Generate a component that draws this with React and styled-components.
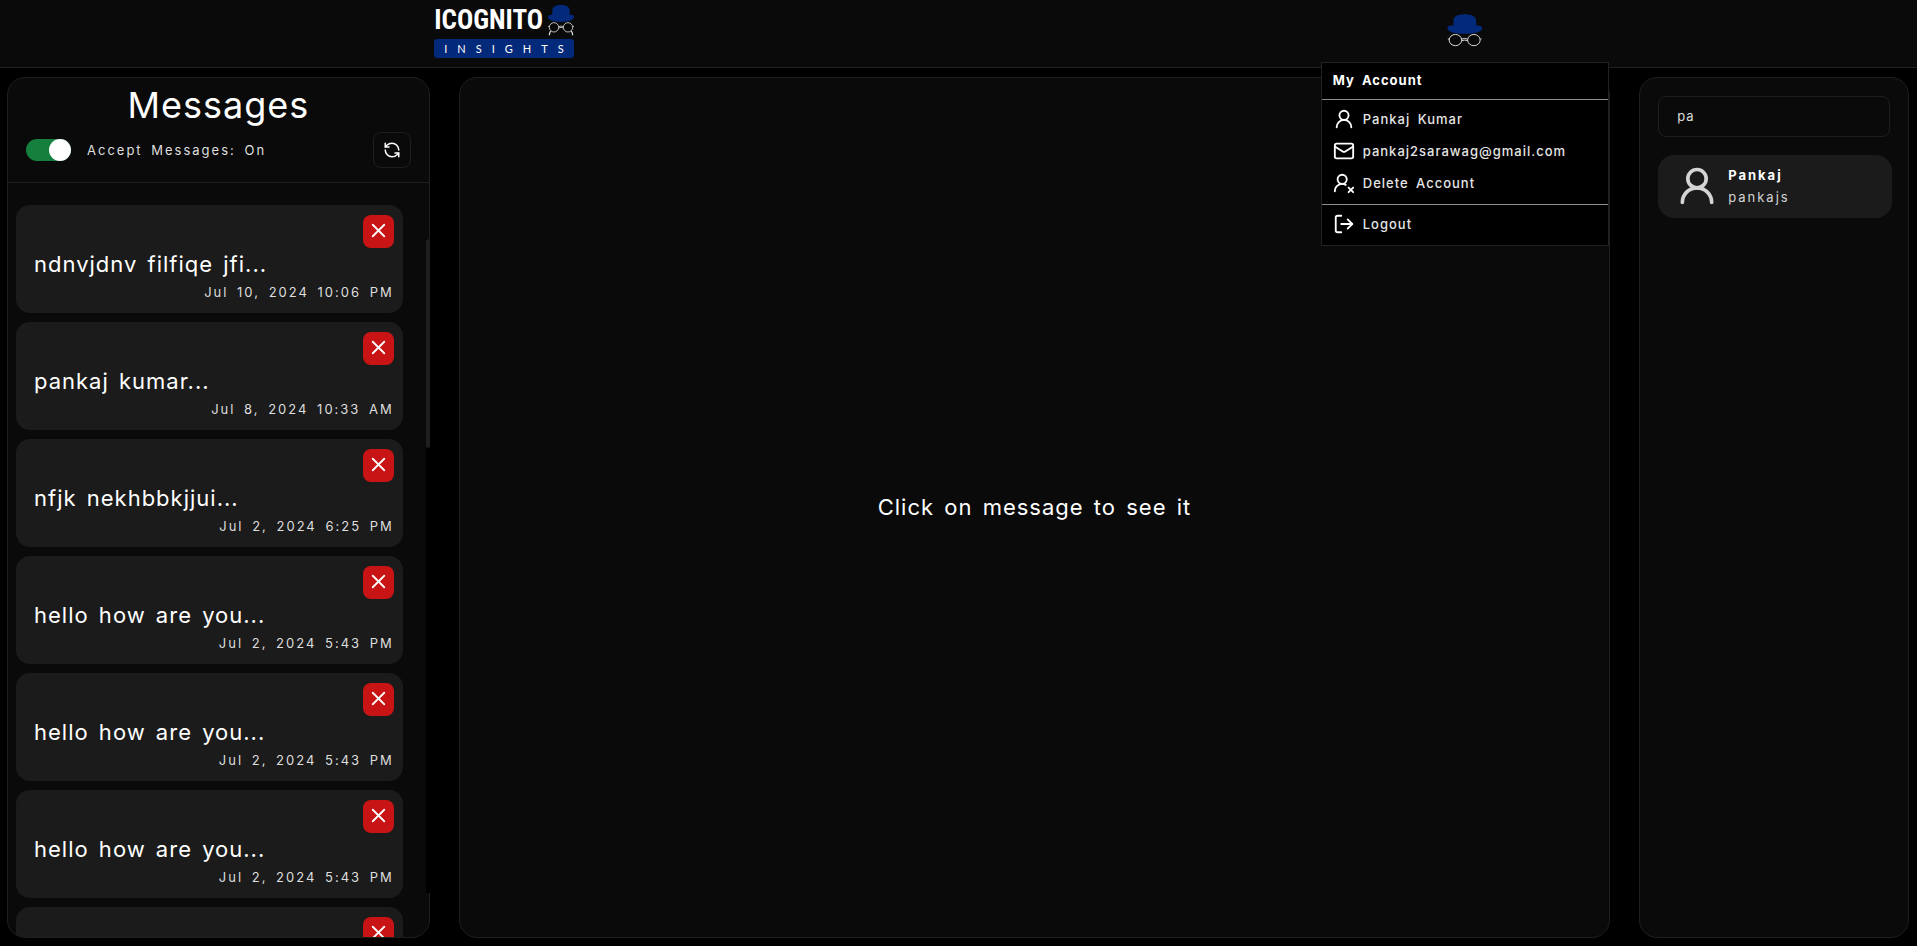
import React, { useState } from "react";
import styled, { createGlobalStyle } from "styled-components";
import { LogOut, Mail, RefreshCcw, UserRound, UserRoundX, X } from "lucide-react";

const Global = createGlobalStyle`
  *, *::before, *::after { box-sizing: border-box; }
  body {
    margin: 0;
    background: #000;
    color: #fff;
    font-family: Inter, "Liberation Sans", sans-serif;
    font-size: 13px;
    line-height: 20px;
    letter-spacing: 1px;
    word-spacing: 3px;
  }
  button, input { font: inherit; letter-spacing: inherit; word-spacing: inherit; color: inherit; }
  button { cursor: pointer; padding: 0; }
  h1, p, ul { margin: 0; padding: 0; }
  ul { list-style: none; }
`;

const Page = styled.div`
  display: flex;
  flex-direction: column;
  height: 100vh;
`;

const Header = styled.header`
  display: flex;
  justify-content: space-around;
  align-items: flex-start;
  flex: none;
  height: 68px;
  background: #0a0a0a;
  border-bottom: 1px solid #222;
`;

const Logo = styled.a`
  display: flex;
  flex-direction: column;
  gap: 3px;
  width: 144px;
  padding: 5px 4px 0 0;
  color: #fff;
  text-decoration: none;
`;

const LogoTop = styled.span`
  display: flex;
  justify-content: space-between;
  align-items: center;
  height: 31px;
`;

const LogoName = styled.span`
  font: bold 27px/31px "Liberation Sans Narrow", "Roboto Condensed", "Liberation Sans", sans-serif;
  letter-spacing: 0;
`;

const LogoTag = styled.span`
  height: 19px;
  padding-left: 10px;
  border-radius: 3px;
  background: #03297a;
  font: 11px/20px Lato, sans-serif;
  letter-spacing: 10px;
  white-space: nowrap;
`;

const Account = styled.div`
  position: relative;
  display: flex;
  justify-content: center;
  width: 36px;
  padding-top: 14px;
`;

const AvatarButton = styled.button`
  display: block;
  border: 0;
  background: none;
`;

const Menu = styled.div`
  position: absolute;
  z-index: 2;
  top: 62px;
  left: 50%;
  width: 288px;
  margin-left: -144px;
  padding-bottom: 4px;
  border: 1px solid #222;
  background: #000;
  font-weight: 500;
`;

const MenuTitle = styled.p`
  padding: 0 11px 2px;
  font-weight: 700;
  line-height: 34px;
`;

const MenuGroup = styled.ul`
  padding-top: 4px;
  border-top: 1px solid #8c8c8c;
  & + & { margin-top: 4px; }
`;

const MenuItem = styled.button`
  display: flex;
  align-items: center;
  gap: 8px;
  width: 100%;
  height: 32px;
  padding: 0 11px 2px;
  border: 0;
  background: none;
  color: #e5e5e5;
  svg { color: #fff; }
`;

const Main = styled.main`
  display: grid;
  grid-template-columns: 47fr 128fr 30fr;
  grid-template-rows: minmax(0, 1fr);
  gap: 29px;
  flex: 1;
  min-height: 0;
  padding: 9px 8px 8px 7px;
`;

const Panel = styled.section`
  position: relative;
  display: flex;
  flex-direction: column;
  min-width: 0;
  border: 1px solid #1f1f1f;
  border-radius: 18px;
  background: #0a0a0a;
`;

const PanelHead = styled.div`
  flex: none;
  padding: 7px 18px 14px;
  border-bottom: 1px solid #1f1f1f;
`;

const Title = styled.h1`
  font-size: 36px;
  font-weight: 400;
  line-height: 40px;
  text-align: center;
`;

const Controls = styled.div`
  display: flex;
  align-items: center;
  justify-content: space-between;
  margin-top: 7px;
`;

const SwitchLabel = styled.label`
  display: flex;
  align-items: center;
  gap: 16px;
  color: #dedede;
  letter-spacing: 2px;
  cursor: pointer;
`;

const Switch = styled.input`
  appearance: none;
  display: flex;
  width: 45px;
  height: 22px;
  margin: 0;
  border-radius: 11px;
  background: #3f3f46;
  cursor: pointer;
  &::before {
    content: "";
    width: 22px;
    height: 22px;
    border-radius: 50%;
    background: #fff;
  }
  &:checked { background: #15803d; justify-content: flex-end; }
`;

const RefreshButton = styled.button`
  display: grid;
  place-items: center;
  width: 38px;
  height: 36px;
  border: 1px solid #1f1f1f;
  border-radius: 8px;
  background: none;
`;

const MessageList = styled.ul`
  display: flex;
  flex-direction: column;
  gap: 9px;
  flex: 1;
  min-height: 0;
  padding: 22px 26px 0 8px;
  overflow-y: auto;
  scrollbar-width: none;
  border-bottom-left-radius: 17px;
`;

const MessageCard = styled.li`
  display: flex;
  flex-direction: column;
  flex: none;
  height: 108px;
  padding: 10px 9px 0 18px;
  border-radius: 14px;
  background: #1b1b1b;
`;

const DeleteButton = styled.button`
  display: grid;
  place-items: center;
  align-self: flex-end;
  width: 31px;
  height: 33px;
  padding-bottom: 2px;
  border: 0;
  border-radius: 8px;
  background: #c81414;
`;

const MessageText = styled.p`
  font-size: 22px;
  line-height: 32px;
`;

const MessageDate = styled.time`
  align-self: flex-end;
  margin-top: 2px;
  color: #dedede;
  letter-spacing: 2px;
`;

const ScrollTrack = styled.div`
  position: absolute;
  top: 161px;
  bottom: 44px;
  right: -1px;
  width: 4px;
  background: #000;
`;

const ScrollThumb = styled.div`
  height: 32%;
  border-radius: 2px;
  background: #1f1f1f;
`;

const Placeholder = styled.p`
  margin: auto;
  padding-bottom: 2px;
  font-size: 22px;
  line-height: 32px;
`;

const SearchInput = styled.input`
  flex: none;
  height: 41px;
  margin: 18px 18px 0;
  padding: 0 18px 2px;
  border: 1px solid #1f1f1f;
  border-radius: 8px;
  outline: 0;
  background: none;
  color: #dedede;
`;

const UserResult = styled.button`
  display: flex;
  align-items: center;
  gap: 9px;
  flex: none;
  height: 63px;
  margin: 18px 16px 0 18px;
  padding: 0 17px 2px;
  border: 0;
  border-radius: 16px;
  background: #1b1b1b;
  color: #d4d4d4;
  letter-spacing: 2px;
  text-align: left;
`;

const UserName = styled.strong`
  display: block;
  color: #fff;
  font-weight: 700;
  line-height: 22px;
`;

const UserHandle = styled.span`
  display: block;
  line-height: 22px;
`;

const hatShape =
  "M18 34V19C18 6 32 0 52 0s35 6 35 19v15h7c7 0 11 3 11 9 0 10-22 16-53 16S0 53 0 43c0-6 4-9 11-9z";

function HatAvatar() {
  return (
    <svg width="36" height="33" viewBox="-1 -1 108 100" aria-hidden="true">
      <path d={hatShape} fill="#03297a" />
      <g fill="none" stroke="#d8d8d8" strokeWidth="3">
        <ellipse cx="24" cy="78" rx="19" ry="17" />
        <ellipse cx="80" cy="78" rx="19" ry="17" />
        <path d="M43 75q9-4 18 0M43 80q9-4 18 0M5 76l-4-2M99 76l4-2" />
      </g>
    </svg>
  );
}

function HatLogo() {
  return (
    <svg width="26" height="31" viewBox="0 0 78 93" aria-hidden="true">
      <path
        d="M13 29V17C13 5 24 0 39 0s26 5 26 17v12h5c5 0 8 3 8 8 0 8-17 14-39 14S0 45 0 37c0-5 3-8 8-8z"
        fill="#03297a"
      />
      <g fill="none" stroke="#d8d8d8" strokeWidth="2.5">
        <circle cx="18" cy="67" r="14" />
        <circle cx="60" cy="67" r="14" />
        <path d="M32 65q7-4 14 0M32 69q7-4 14 0M4 65l-4-1M74 65l4-1" />
        <path d="M8 78q-4 6-4 13M70 78q4 6 4 13" strokeWidth="4" />
      </g>
    </svg>
  );
}

const messages = [
  { text: "ndnvjdnv filfiqe jfi...", date: "Jul 10, 2024 10:06 PM" },
  { text: "pankaj kumar...", date: "Jul 8, 2024 10:33 AM" },
  { text: "nfjk nekhbbkjjui...", date: "Jul 2, 2024 6:25 PM" },
  { text: "hello how are you...", date: "Jul 2, 2024 5:43 PM" },
  { text: "hello how are you...", date: "Jul 2, 2024 5:43 PM" },
  { text: "hello how are you...", date: "Jul 2, 2024 5:43 PM" },
  { text: "hello how are you...", date: "Jul 2, 2024 5:43 PM" },
];

export default function App() {
  const [accepting, setAccepting] = useState(true);
  const [query, setQuery] = useState("pa");

  return (
    <Page>
      <Global />
      <Header>
        <Logo href="#">
          <LogoTop>
            <LogoName>ICOGNITO</LogoName>
            <HatLogo />
          </LogoTop>
          <LogoTag>INSIGHTS</LogoTag>
        </Logo>
        <Account>
          <AvatarButton aria-label="Account menu">
            <HatAvatar />
          </AvatarButton>
          <Menu>
            <MenuTitle>My Account</MenuTitle>
            <MenuGroup>
              <li><MenuItem><UserRound size={22} />Pankaj Kumar</MenuItem></li>
              <li><MenuItem><Mail size={22} />pankaj2sarawag@gmail.com</MenuItem></li>
              <li><MenuItem><UserRoundX size={22} />Delete Account</MenuItem></li>
            </MenuGroup>
            <MenuGroup>
              <li><MenuItem><LogOut size={22} />Logout</MenuItem></li>
            </MenuGroup>
          </Menu>
        </Account>
      </Header>
      <Main>
        <Panel>
          <PanelHead>
            <Title>Messages</Title>
            <Controls>
              <SwitchLabel>
                <Switch
                  type="checkbox"
                  role="switch"
                  checked={accepting}
                  onChange={(e) => setAccepting(e.target.checked)}
                />
                Accept Messages: {accepting ? "On" : "Off"}
              </SwitchLabel>
              <RefreshButton aria-label="Refresh">
                <RefreshCcw size={18} />
              </RefreshButton>
            </Controls>
          </PanelHead>
          <MessageList>
            {messages.map((m, i) => (
              <MessageCard key={i}>
                <DeleteButton aria-label="Delete message">
                  <X size={23} strokeWidth={1.9} />
                </DeleteButton>
                <MessageText>{m.text}</MessageText>
                <MessageDate>{m.date}</MessageDate>
              </MessageCard>
            ))}
          </MessageList>
          <ScrollTrack>
            <ScrollThumb />
          </ScrollTrack>
        </Panel>
        <Panel>
          <Placeholder>Click on message to see it</Placeholder>
        </Panel>
        <Panel>
          <SearchInput
            aria-label="Search users"
            value={query}
            onChange={(e) => setQuery(e.target.value)}
          />
          <UserResult>
            <UserRound size={44} />
            <span>
              <UserName>Pankaj</UserName>
              <UserHandle>pankajs</UserHandle>
            </span>
          </UserResult>
        </Panel>
      </Main>
    </Page>
  );
}
